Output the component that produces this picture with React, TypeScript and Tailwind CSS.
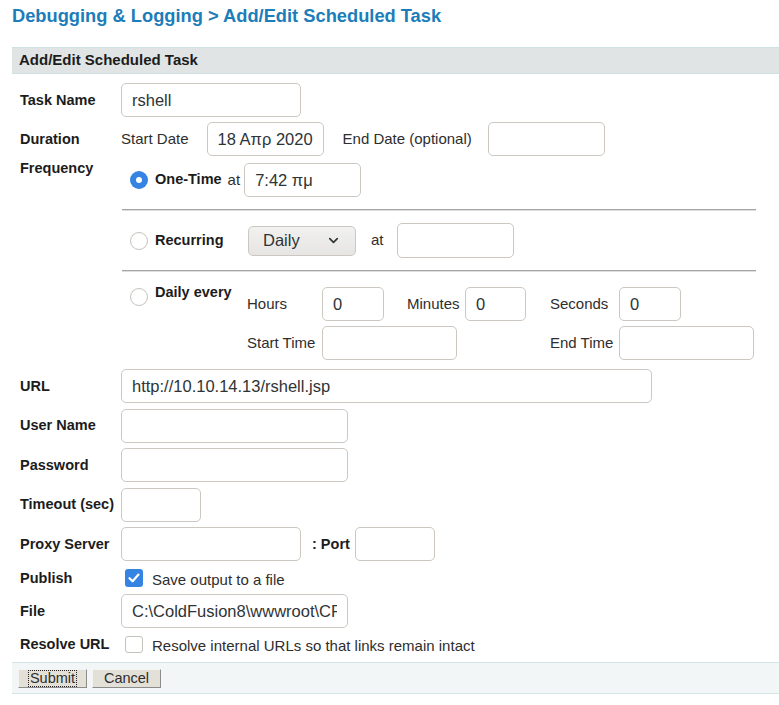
import { ChevronDown } from 'lucide-react';

function Field({ className, value = '' }: { className: string; value?: string }) {
  return (
    <input
      readOnly
      value={value}
      className={
        'h-[34px] rounded-[5px] border border-[#cdc7c2] bg-white px-[10px] text-[16.5px] text-[#2e3436] outline-none ' +
        className
      }
    />
  );
}

function Radio({ checked = false }: { checked?: boolean }) {
  if (checked) {
    return (
      <span className="flex h-[18px] w-[18px] shrink-0 items-center justify-center rounded-full bg-[#3584e4]">
        <span className="block h-[6px] w-[6px] rounded-full bg-white" />
      </span>
    );
  }
  return <span className="block h-[18px] w-[18px] shrink-0 rounded-full border border-[#c6c2bd] bg-white" />;
}

function Checkbox({ checked = false }: { checked?: boolean }) {
  if (checked) {
    return (
      <span className="flex h-[18px] w-[18px] shrink-0 items-center justify-center rounded-[3px] bg-[#3584e4]">
        <svg width="14" height="14" viewBox="0 0 14 14" fill="none">
          <path d="M2.5 7.2 L5.6 10.2 L11.5 3.6" stroke="white" strokeWidth="2.2" strokeLinecap="round" strokeLinejoin="round" />
        </svg>
      </span>
    );
  }
  return <span className="block h-[17px] w-[18px] shrink-0 rounded-[3px] border border-[#c6c2bd] bg-white" />;
}

function Row({ label, children, className = '' }: { label: string; children: React.ReactNode; className?: string }) {
  return (
    <div className={'flex items-center ' + className}>
      <div className="w-[109px] shrink-0 pl-[8px] pt-[1px] text-[14.5px] font-bold text-[#1c1c1c]">{label}</div>
      {children}
    </div>
  );
}

function Rule() {
  return <div className="ml-[1px] w-[634px] border-t border-b border-t-[#a4a4a4] border-b-[#dedede]" />;
}

export default function App() {
  return (
    <div className="h-[705px] w-full overflow-hidden bg-white font-['Liberation_Sans',Arial,sans-serif] text-[#2e2e2e]">
      <h1 className="pl-[12px] pt-[5px] text-[18.3px] font-bold leading-[22px] text-[#1b7db9]">
        Debugging &amp; Logging &gt; Add/Edit Scheduled Task
      </h1>

      <div className="ml-[12px] mt-[20px] flex h-[27px] items-center border-y border-[#d0e1e4] bg-[#e0e4e5] pl-[7px] text-[15px] font-bold text-[#1c1c1c]">
        Add/Edit Scheduled Task
      </div>

      <div className="ml-[12px] pt-[9px]">
        <Row label="Task Name">
          <Field className="w-[180px]" value="rshell" />
        </Row>

        <Row label="Duration" className="mt-[5px]">
          <span className="text-[15px]">Start Date</span>
          <Field className="ml-[18px] w-[117px]" value="18 Απρ 2020" />
          <span className="ml-[19px] text-[15px]">End Date (optional)</span>
          <Field className="ml-[16px] w-[117px]" />
        </Row>

        {/* Frequency block */}
        <div className="mt-[5px] flex items-start">
          <div className="w-[109px] shrink-0 pl-[8px] text-[14.5px] font-bold leading-[15px] text-[#1c1c1c]">Frequency</div>
          <div className="flex flex-col">
            <div className="mt-[2px] flex h-[34px] items-center">
              <span className="ml-[9px] block">
                <Radio checked />
              </span>
              <span className="ml-[7px] text-[14.5px] font-bold text-[#1c1c1c]">One-Time</span>
              <span className="ml-[6px] text-[15px]">at</span>
              <Field className="ml-[4px] w-[117px]" value="7:42 πμ" />
            </div>

            <div className="mt-[12px]">
              <Rule />
            </div>

            <div className="mt-[12px] flex h-[35px] items-center">
              <span className="ml-[9px] block">
                <Radio />
              </span>
              <span className="ml-[7px] w-[93px] text-[14.5px] font-bold text-[#1c1c1c]">Recurring</span>
              <div className="flex h-[30px] w-[108px] items-center justify-between rounded-[5px] border border-[#cdc7c2] bg-gradient-to-b from-[#f1f1f0] to-[#e6e5e3] pl-[14px] pr-[14px] text-[16.5px] text-[#2e3436]">
                <span>Daily</span>
                <ChevronDown size={15} strokeWidth={2.6} className="text-[#2e3436]" />
              </div>
              <span className="ml-[15px] text-[15px]">at</span>
              <Field className="ml-[13px] h-[35px] w-[117px]" />
            </div>

            <div className="mt-[12px]">
              <Rule />
            </div>

            <div className="mt-[13px] flex items-start">
              <div className="flex w-[126px] shrink-0 items-start">
                <span className="ml-[9px] mt-[3px] block">
                  <Radio />
                </span>
                <span className="ml-[7px] text-[14.5px] font-bold leading-[15px] text-[#1c1c1c]">Daily every</span>
              </div>
              <div className="pt-[2px] text-[15px]">
                <div className="flex h-[34px] items-center">
                  <span className="w-[75px]">Hours</span>
                  <Field className="w-[62px]" value="0" />
                  <span className="ml-[23px] w-[58px]">Minutes</span>
                  <Field className="w-[61px]" value="0" />
                  <span className="ml-[24px] w-[69px]">Seconds</span>
                  <Field className="w-[62px]" value="0" />
                </div>
                <div className="mt-[5px] flex h-[34px] items-center">
                  <span className="w-[75px]">Start Time</span>
                  <Field className="w-[135px]" />
                  <span className="ml-[93px] w-[69px]">End Time</span>
                  <Field className="w-[135px]" />
                </div>
              </div>
            </div>
          </div>
        </div>

        <Row label="URL" className="mt-[9px]">
          <Field className="w-[531px]" value="http://10.10.14.13/rshell.jsp" />
        </Row>
        <Row label="User Name" className="mt-[5.5px]">
          <Field className="w-[227px]" />
        </Row>
        <Row label="Password" className="mt-[5.5px]">
          <Field className="w-[227px]" />
        </Row>
        <Row label="Timeout (sec)" className="mt-[5.5px]">
          <Field className="w-[80px]" />
        </Row>
        <Row label="Proxy Server" className="mt-[5.5px]">
          <Field className="w-[180px]" />
          <span className="ml-[11px] pt-[1px] text-[14.5px] font-bold text-[#1c1c1c]">: Port</span>
          <Field className="ml-[5px] w-[80px]" />
        </Row>

        <Row label="Publish" className="mt-[5px] h-[24px]">
          <span className="ml-[4px] block">
            <Checkbox checked />
          </span>
          <span className="ml-[9px] mt-[5px] text-[15px]">Save output to a file</span>
        </Row>

        <Row label="File" className="mt-[4px]">
          <Field className="w-[227px]" value="C:\ColdFusion8\wwwroot\CFIDE\rshell.jsp" />
        </Row>

        <Row label="Resolve URL" className="mt-[4px] h-[24px]">
          <span className="ml-[4px] block">
            <Checkbox />
          </span>
          <span className="ml-[9px] mt-[5px] text-[15px]">Resolve internal URLs so that links remain intact</span>
        </Row>
      </div>

      <div className="ml-[12px] mt-[6px] flex h-[32px] items-start gap-[5px] border-y border-[#d5e4e7] bg-[#f3f6f7] pl-[6px] pt-[6px]">
        <button className="flex h-[19px] w-[69px] items-center justify-center border border-b-[#8c8c8c] border-l-[#f4f4f4] border-r-[#8c8c8c] border-t-[#f4f4f4] bg-[#e3e0d8] text-[14.5px] leading-none text-[#2e2e2e]">
          <span className="border border-dotted border-[#222] px-[1px] leading-[15px]">Submit</span>
        </button>
        <button className="flex h-[19px] w-[69px] items-center justify-center border border-b-[#8c8c8c] border-l-[#f4f4f4] border-r-[#8c8c8c] border-t-[#f4f4f4] bg-[#e3e0d8] text-[14.5px] leading-none text-[#2e2e2e]">
          Cancel
        </button>
      </div>
    </div>
  );
}
